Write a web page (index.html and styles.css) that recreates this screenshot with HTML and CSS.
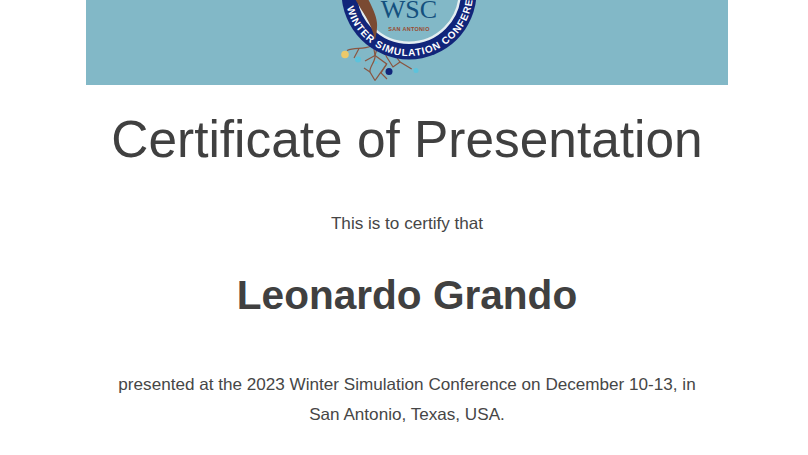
FILE: index.html
```html
<!DOCTYPE html>
<html lang="en">
<head>
    <meta charset="UTF-8">
    <meta name="viewport" content="width=device-width, initial-scale=1.0">
    <title>Certificate of Presentation</title>
    <link rel="stylesheet" href="styles.css">
</head>
<body>
    <div class="certificate">
        <div class="banner">
            <svg class="logo" width="160" height="160" viewBox="0 0 160 160">
                <defs>
                    <path id="ring-text" d="M 16 71 A 64 64 0 1 0 80 7"/>
                </defs>
                <!-- roots -->
                <g class="roots">
                    <path d="M18 129.500 C26 126 34 129 42 125"/>
                    <path d="M30 127.500 L25 137"/>
                    <path d="M44 122 L46 134.500 C47 140 40 146 41 151 L46 159.500"/>
                    <path d="M49 124 L46 134.500 L57.700 143 C54 148 50 154 46 159.500"/>
                    <path d="M46 134.500 L36 140"/>
                    <path d="M52 124 L57.700 136 L64 146 L71 141 L82.700 148"/>
                    <path d="M62 124 L66 134 L71 141"/>
                    <path d="M41 151 L35 147"/>
                    <path d="M57.700 143 L52 152 L58 158"/>
                </g>
                <circle class="ring" cx="80" cy="71" r="67.500"/>
                <circle class="ring-line" cx="80" cy="71" r="50.800"/>
                <path class="trunk" d="M20 68 L34 68 C42 84 49 96 48 106 C48 110 47 115 46 119 C44 110 41 103 37 96 C32 88 26 78 20 68 Z"/>
                <text class="ring-label"><textPath href="#ring-text" startOffset="15.500">WINTER SIMULATION CONFERENCE</textPath></text>
                <text class="monogram" x="80" y="97" text-anchor="middle">WSC</text>
                <text class="city" x="80" y="110" text-anchor="middle">SAN ANTONIO</text>
                <circle class="dot-yellow" cx="16" cy="133.500" r="3.800"/>
                <circle class="dot-cyan" cx="29" cy="138.500" r="3"/>
                <circle class="dot-navy" cx="60" cy="150.500" r="3.500"/>
                <circle class="dot-cyan" cx="87" cy="149.500" r="2.500"/>
                <circle class="dot-cyan" cx="47" cy="141.500" r="1.500"/>
            </svg>
        </div>
        <h1>Certificate of Presentation</h1>
        <p class="intro">This is to certify that</p>
        <h2>Leonardo Grando</h2>
        <p class="details">presented at the 2023 Winter Simulation Conference on December 10-13, in San Antonio, Texas, USA.</p>
    </div>
</body>
</html>
```
FILE: styles.css
```css
body {
    font-family: "Liberation Sans", Arial, sans-serif;
    margin: 0;
    background-color: #fff;
    color: #404040;
}
.certificate {
    width: 642px;
    margin-left: 86px;
    text-align: center;
}
.banner {
    height: 85px;
    background-color: #82b8c7;
    display: flex;
    justify-content: center;
    align-items: flex-end;
    overflow: hidden;
}
.logo {
    flex: none;
    margin-bottom: 4.5px;
    margin-left: 4px;
    overflow: visible;
}
.roots path {
    fill: none;
    stroke: #8a5540;
    stroke-width: 1.2;
}
.ring {
    fill: #11257a;
}
.ring-line {
    fill: #82b8c7;
    stroke: #e4eef1;
    stroke-width: 2.4;
}
.trunk {
    fill: #7a4a32;
}
.ring-label {
    fill: #fff;
    font-size: 10px;
    font-weight: bold;
    letter-spacing: 0.9px;
}
.monogram {
    fill: #14507e;
    font-family: "Liberation Serif", serif;
    font-size: 26px;
}
.city {
    fill: #9a4a30;
    font-size: 5.5px;
    font-weight: bold;
    letter-spacing: 0.3px;
}
.dot-yellow {
    fill: #ecc96a;
}
.dot-cyan {
    fill: #5cc3dc;
}
.dot-navy {
    fill: #11257a;
}
h1 {
    font-size: 51.4px;
    font-weight: normal;
    line-height: 56px;
    margin: 26px 0 0;
}
.intro {
    font-size: 17.12px;
    line-height: 30px;
    margin: 42px 0 0;
    color: #464646;
}
h2 {
    font-size: 40.6px;
    font-weight: bold;
    line-height: 44px;
    margin: 34px 0 0;
}
.details {
    font-size: 17.12px;
    line-height: 30px;
    margin: 53px 0 0;
    padding: 0 20px;
    color: #464646;
}
```
